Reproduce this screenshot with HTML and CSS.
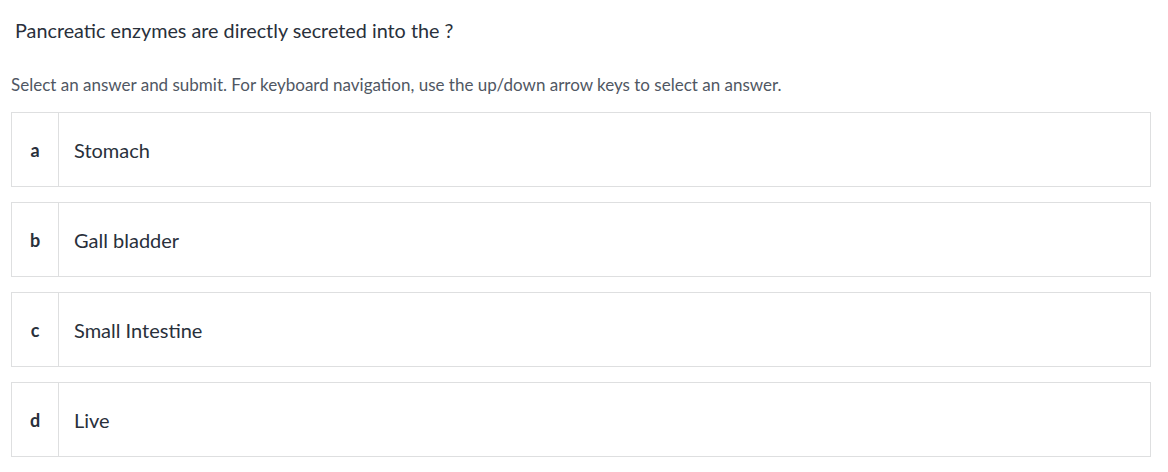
FILE: index.html
```html
<!DOCTYPE html>
<html>
<head>
<meta charset="utf-8">
<link rel="stylesheet" href="styles.css">
</head>
<body>
<div class="quiz">
  <div class="question">Pancreatic enzymes are directly secreted into the ?</div>
  <div class="hint">Select an answer and submit. For keyboard navigation, use the up/down arrow keys to select an answer.</div>
  <ul class="answers">
    <li class="answer"><span class="letter">a</span><span class="text">Stomach</span></li>
    <li class="answer"><span class="letter">b</span><span class="text">Gall bladder</span></li>
    <li class="answer"><span class="letter">c</span><span class="text">Small Intestine</span></li>
    <li class="answer"><span class="letter">d</span><span class="text">Live</span></li>
  </ul>
</div>
</body>
</html>
```
FILE: styles.css
```css
html, body {
  margin: 0;
  padding: 0;
  background: #fff;
}
body {
  font-family: "Lato", "Open Sans", sans-serif;
  color: #29303b;
}
.quiz {
  padding: 16px 17px 0 11px;
}
.question {
  font-size: 19.8px;
  line-height: 28px;
  padding-left: 4px;
  color: #29303b;
}
.hint {
  margin-top: 30px;
  font-size: 17px;
  line-height: 22px;
  color: #505763;
}
.answers {
  list-style: none;
  margin: 16px 0 0;
  padding: 0;
  display: flex;
  flex-direction: column;
  gap: 15px;
}
.answer {
  display: flex;
  align-items: stretch;
  height: 75px;
  box-sizing: border-box;
  border: 1px solid #dedfe0;
}
.letter {
  width: 46px;
  flex: none;
  display: flex;
  align-items: center;
  justify-content: center;
  border-right: 1px solid #dedfe0;
  font-weight: 700;
  font-size: 18px;
}
.text {
  display: flex;
  align-items: center;
  padding-left: 15px;
  font-size: 20px;
}
```
